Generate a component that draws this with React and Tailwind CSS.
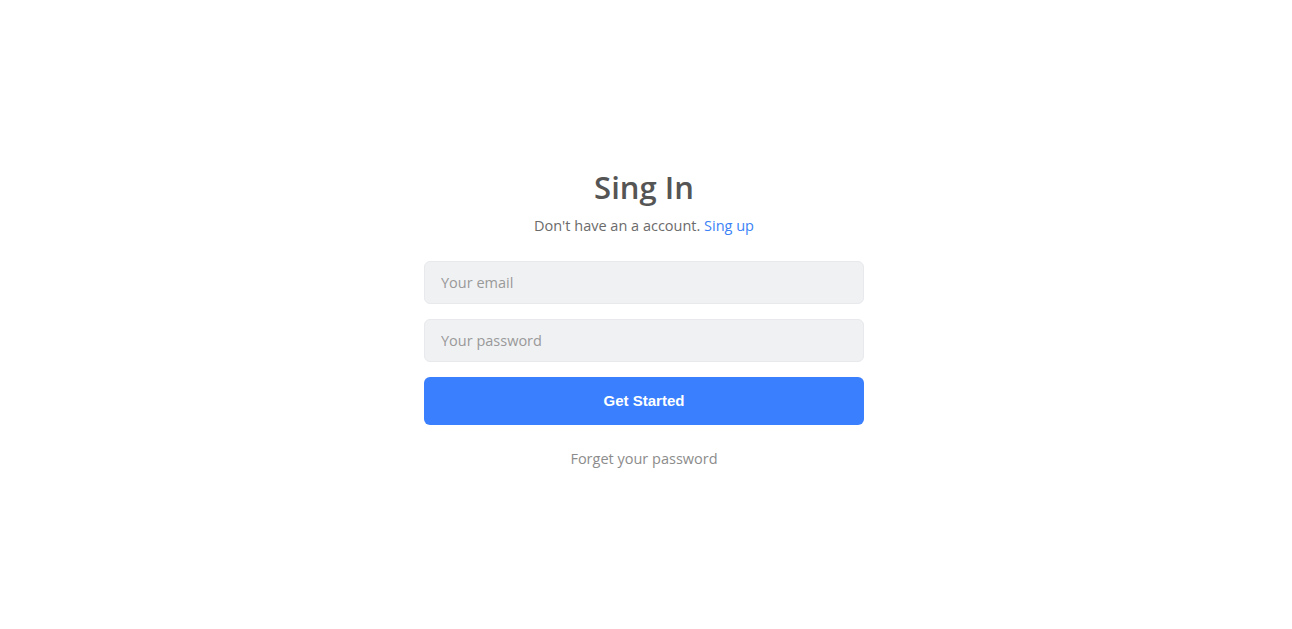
import React, { useState } from "react";

const SignIn = () => {
  const [email, setEmail] = useState("");
  const [password, setPassword] = useState("");

  return (
    <div className="flex flex-col items-center justify-center w-full h-screen pt-[8px] pr-[4px] bg-white font-['Open_Sans',sans-serif]">
      {/* heading */}
      <h1 className="text-[31px] leading-[40px] font-semibold text-[#555555]">Sing In</h1>
      <p className="mt-[8px] text-[14.5px] leading-[22px] text-[#6b6b6b]">
        Don't have an a account. <a href="#" className="text-[#3b82f6]">Sing up</a>
      </p>

      {/* form */}
      <form className="flex flex-col w-[440px] mt-[24px]" onSubmit={(e) => e.preventDefault()}>
        <input
          type="email"
          value={email}
          onChange={(e) => setEmail(e.target.value)}
          placeholder="Your email"
          className="h-[43px] px-4 bg-[#f0f1f3] border border-[#e7e9ec] rounded-md text-[14.5px] text-[#555] placeholder:text-[#999999] outline-none"
        />
        <input
          type="password"
          value={password}
          onChange={(e) => setPassword(e.target.value)}
          placeholder="Your password"
          className="h-[43px] mt-[15px] px-4 bg-[#f0f1f3] border border-[#e7e9ec] rounded-md text-[14.5px] text-[#555] placeholder:text-[#999999] outline-none"
        />
        <button
          type="submit"
          className="h-[48px] mt-[15px] bg-[#3a7ffe] rounded-md text-white text-[15px] font-bold font-['Liberation_Sans',Arial,sans-serif] cursor-pointer"
        >
          Get Started
        </button>
      </form>

      <a href="#" className="mt-[23px] text-[14.5px] leading-[22px] text-[#8c8c8c]">
        Forget your password
      </a>
    </div>
  );
};

export default function App() {
  return <SignIn />;
}
